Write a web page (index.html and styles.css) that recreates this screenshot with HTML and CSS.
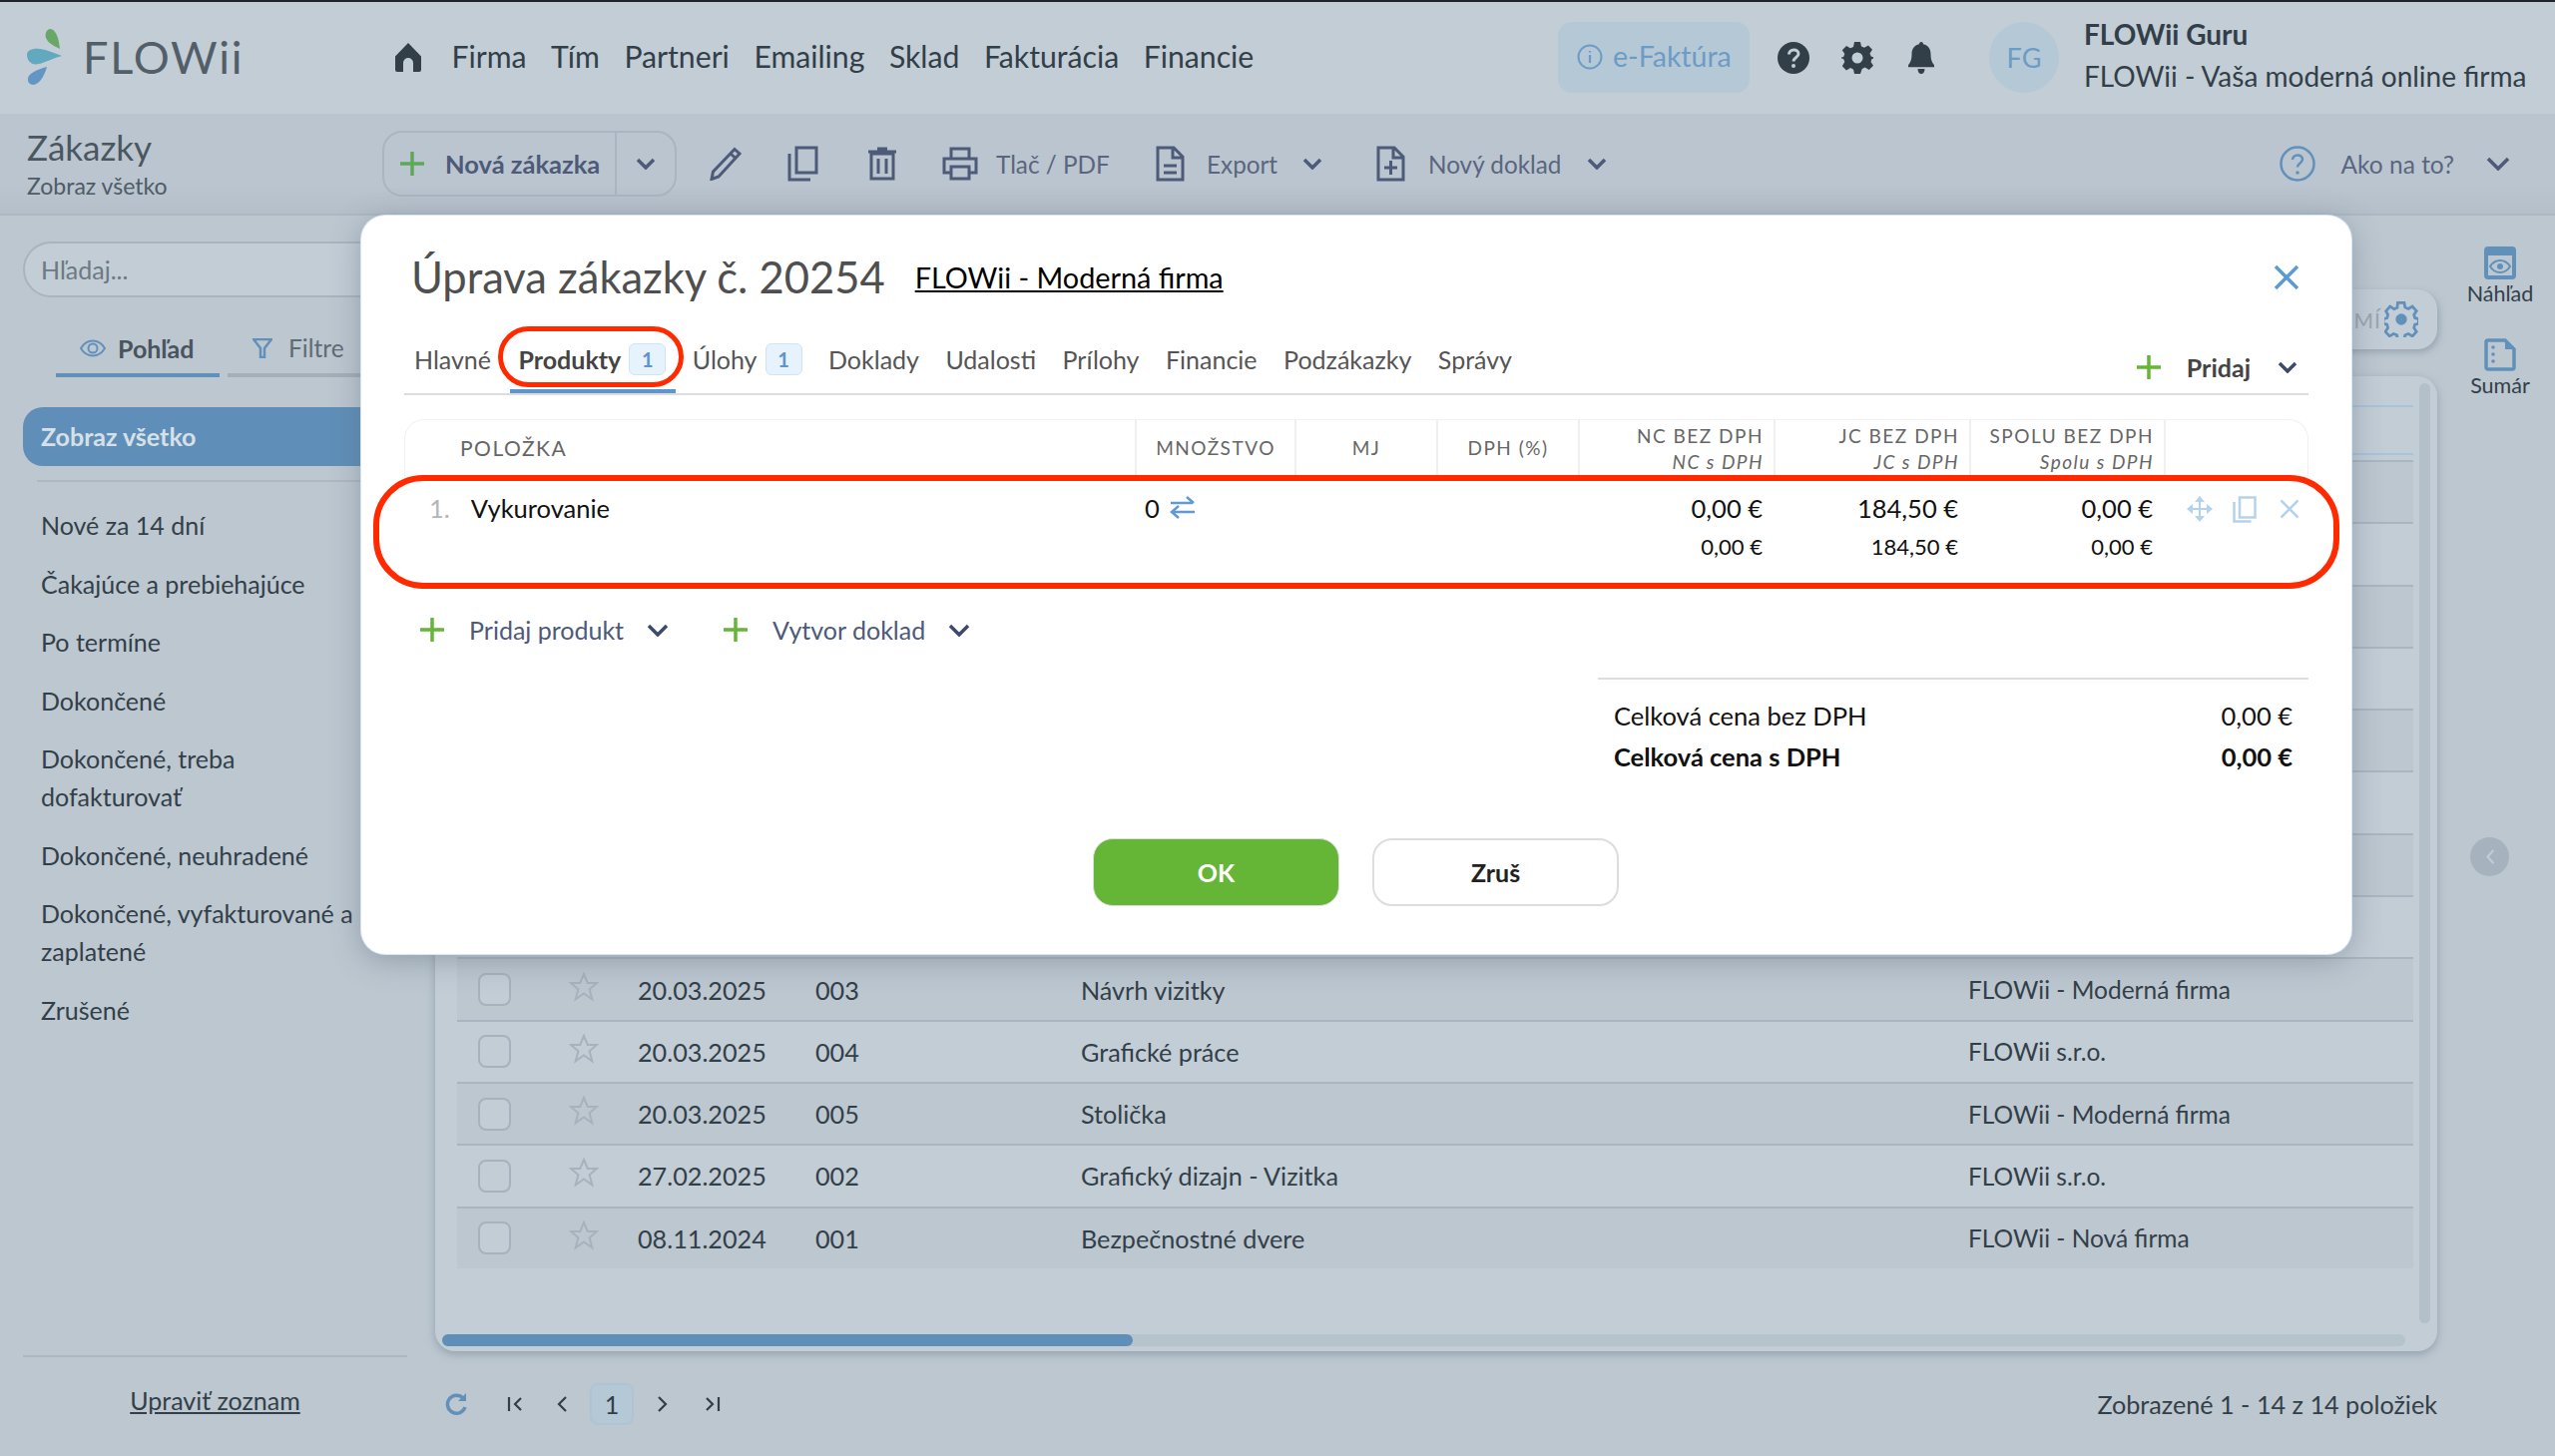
FILE: index.html
```html
<!DOCTYPE html>
<html lang="sk">
<head>
<meta charset="utf-8">
<title>FLOWii - Zákazky</title>
<link rel="stylesheet" href="styles.css">
</head>
<body>
<div class="app">
  <header class="topbar">
    <div class="logo">
      <svg class="logo-mark" viewBox="0 0 44 58" width="44" height="58"><path fill="#67a866" d="M24 1c-4 1-5 5-4 9 2 5 8 8 14 11-1-8-2-13-5-17-1-2-3-3-5-3z"/><path fill="#62a8bf" d="M1 27c0 6 5 11 12 9 6-1 14-6 23-8-8-3-15-6-22-7C7 20 1 22 1 27z"/><path fill="#6496c3" d="M2 52c0 4 5 7 10 3 4-3 7-9 9-16-8 2-15 5-18 9-1 1-1 3-1 4z"/></svg>
      <span class="logo-text">FLOWii</span>
    </div>
    <nav class="nav">
      <svg class="home" viewBox="0 0 26 29" width="26" height="29"><path fill="#333f48" d="M13 0 0 13.500V27a2 2 0 0 0 2 2h6v-9a5 5 0 0 1 10 0v9h6a2 2 0 0 0 2-2V13.500z"/></svg>
      <a>Firma</a><a>Tím</a><a>Partneri</a><a>Emailing</a><a>Sklad</a><a>Fakturácia</a><a>Financie</a>
    </nav>
    <div class="top-right">
      <div class="efaktura">
        <svg viewBox="0 0 26 26" width="26" height="26"><circle cx="13" cy="13" r="11.500" fill="none" stroke="#6c9cc5" stroke-width="2"/><path d="M13 11v8M13 7v1.500" stroke="#6c9cc5" stroke-width="2.200" fill="none"/></svg>
        <span>e-Faktúra</span>
      </div>
      <svg class="ti help" viewBox="0 0 32 32" width="32" height="32"><circle cx="16" cy="16" r="16" fill="#333f48"/><path d="M11.500 12.500c0-6 9.500-6 9.500-.5 0 3.500-5 3.500-5 7.500" fill="none" stroke="#c2cdd6" stroke-width="3"/><circle cx="16" cy="24" r="2" fill="#c2cdd6"/></svg>
      <svg class="ti gear" viewBox="0 0 32 32" width="32" height="32"><path fill="#333f48" fill-rule="evenodd" d="M13 0h6l1 4.500 3 1.300 4-2.400 4 4.300-2.500 3.800 1.200 3L35 16v0l-4.300 1-.2 0-1 3 2.500 3.800-4.300 4.300-4-2.500-3 1.300L19 32h-6l-1-4.600-3-1.300-4 2.500-4.200-4.300L3.300 20l-1.200-3L-2 16l4.100-1 1.200-3L.8 8.200 5 3.900l4 2.400 3-1.300zM16 10.500a5.500 5.500 0 1 0 0 11 5.500 5.500 0 0 0 0-11z"/></svg>
      <svg class="ti bell" viewBox="0 0 26 32" width="26" height="32"><path fill="#333f48" d="M13 0c1.300 0 2 1 2 2.200 5 1 7.500 4.800 7.500 10 0 5 1 8 3.500 11v2H0v-2c2.500-3 3.500-6 3.500-11 0-5.200 2.500-9 7.500-10C11 1 11.700 0 13 0zM9.500 27h7c0 3-1.500 5-3.500 5s-3.500-2-3.500-5z"/></svg>
      <div class="avatar">FG</div>
      <div class="user"><strong>FLOWii Guru</strong><span>FLOWii - Vaša moderná online firma</span></div>
    </div>
  </header>

  <section class="toolbar">
    <div class="page-title"><h1>Zákazky</h1><p>Zobraz všetko</p></div>
    <div class="split">
      <div class="split-main">
        <svg class="plus" viewBox="0 0 26 26" width="26" height="26"><path d="M13 1v24M1 13h24" stroke="#5ea85a" stroke-width="3.500"/></svg>
        <b>Nová zákazka</b>
      </div>
      <div class="split-caret"><svg class="chev" viewBox="0 0 20 12" width="20" height="12"><path d="M2 2l8 8 8-8" fill="none" stroke="#4d5a78" stroke-width="3"/></svg></div>
    </div>
    <div class="tools">
      <svg class="tool-pencil" viewBox="0 0 32 34" width="32" height="34"><path d="M25 2.500l5 4.500L9 30l-7 2.500L3.500 25zM21 7l5 4.500" fill="none" stroke="#4d5a78" stroke-width="3"/></svg>
      <svg class="tool-copy" viewBox="0 0 31 36" width="31" height="36"><path d="M9 2h20v25H9zM2 8v26h21" fill="none" stroke="#4d5a78" stroke-width="3"/></svg>
      <svg class="tool-trash" viewBox="0 0 28 34" width="28" height="34"><path d="M3 7h22v25H3zM0 5h28M9 2h10M10 12v15M18 12v15" fill="none" stroke="#4d5a78" stroke-width="3"/></svg>
      <div class="tool-print"><svg viewBox="0 0 36 34" width="36" height="34"><path d="M9 11V2h18v9M9 26H2V12h32v14h-7M9 20h18v12H9z" fill="none" stroke="#4d5a78" stroke-width="3"/></svg><span>Tlač / PDF</span></div>
      <div class="tool-export"><svg viewBox="0 0 29 36" width="29" height="36"><path d="M2 2h16l9 9v23H2zM17 2v10h10M8 20h13M8 27h13" fill="none" stroke="#4d5a78" stroke-width="3"/></svg><span>Export</span><svg class="chev" viewBox="0 0 20 12" width="20" height="12"><path d="M2 2l8 8 8-8" fill="none" stroke="#4d5a78" stroke-width="3"/></svg></div>
      <div class="tool-new"><svg viewBox="0 0 29 36" width="29" height="36"><path d="M2 2h16l9 9v23H2zM17 2v10h10M14.500 15v14M8 22h13" fill="none" stroke="#4d5a78" stroke-width="3"/></svg><span>Nový doklad</span><svg class="chev" viewBox="0 0 20 12" width="20" height="12"><path d="M2 2l8 8 8-8" fill="none" stroke="#4d5a78" stroke-width="3"/></svg></div>
    </div>
    <div class="howto">
      <svg viewBox="0 0 36 36" width="36" height="36"><circle cx="18" cy="18" r="16.500" fill="none" stroke="#6191bb" stroke-width="2.500"/><path d="M13 14c0-6 10-6 10-.5 0 4-5 4-5 8" fill="none" stroke="#6191bb" stroke-width="2.500"/><circle cx="18" cy="27" r="1.800" fill="#6191bb"/></svg>
      <span>Ako na to?</span>
      <svg class="chev" viewBox="0 0 24 14" width="24" height="14"><path d="M2 2l10 10L22 2" fill="none" stroke="#4d5a78" stroke-width="3"/></svg>
    </div>
  </section>

  <div class="workspace">
    <aside class="sidebar">
      <div class="search">Hľadaj...</div>
      <div class="side-tabs">
        <div class="side-tab active"><svg viewBox="0 0 26 18" width="26" height="18"><path d="M1 9c6-10 18-10 24 0-6 10-18 10-24 0z" fill="none" stroke="#6191bb" stroke-width="2"/><circle cx="13" cy="9" r="4.500" fill="none" stroke="#6191bb" stroke-width="2"/></svg><b>Pohľad</b></div>
        <div class="side-tab"><svg viewBox="0 0 20 20" width="20" height="20"><path d="M1 1h18l-7 9v9H8v-9z" fill="none" stroke="#6191bb" stroke-width="2.500"/></svg><span>Filtre</span></div>
      </div>
      <div class="side-current">Zobraz všetko</div>
      <ul class="side-list">
        <li>Nové za 14 dní</li>
        <li>Čakajúce a prebiehajúce</li>
        <li>Po termíne</li>
        <li>Dokončené</li>
        <li>Dokončené, treba dofakturovať</li>
        <li>Dokončené, neuhradené</li>
        <li>Dokončené, vyfakturované a zaplatené</li>
        <li>Zrušené</li>
      </ul>
      <div class="side-foot"><a>Upraviť zoznam</a></div>
    </aside>

    <main class="content">
      <div class="card">
        <div class="rows">
          <div class="thead"></div><div class="thead thead-thin"></div>
          <div class="row"></div><div class="row"></div><div class="row"></div><div class="row"></div>
          <div class="row"></div><div class="row"></div><div class="row"></div><div class="row"></div>
          <div class="row"><i class="check"></i><svg class="star" viewBox="0 0 30 30" width="30" height="30"><path d="M15 2l3.800 9h9.200l-7.400 6.300 2.700 10L15 21.500 6.700 27.300l2.700-10L2 11h9.200z" fill="none" stroke="#a6b2bd" stroke-width="2"/></svg><span class="c-date">20.03.2025</span><span class="c-num">003</span><span class="c-name">Návrh vizitky</span><span class="c-firm">FLOWii - Moderná firma</span></div>
          <div class="row"><i class="check"></i><svg class="star" viewBox="0 0 30 30" width="30" height="30"><path d="M15 2l3.800 9h9.200l-7.400 6.300 2.700 10L15 21.500 6.700 27.300l2.700-10L2 11h9.200z" fill="none" stroke="#a6b2bd" stroke-width="2"/></svg><span class="c-date">20.03.2025</span><span class="c-num">004</span><span class="c-name">Grafické práce</span><span class="c-firm">FLOWii s.r.o.</span></div>
          <div class="row"><i class="check"></i><svg class="star" viewBox="0 0 30 30" width="30" height="30"><path d="M15 2l3.800 9h9.200l-7.400 6.300 2.700 10L15 21.500 6.700 27.300l2.700-10L2 11h9.200z" fill="none" stroke="#a6b2bd" stroke-width="2"/></svg><span class="c-date">20.03.2025</span><span class="c-num">005</span><span class="c-name">Stolička</span><span class="c-firm">FLOWii - Moderná firma</span></div>
          <div class="row"><i class="check"></i><svg class="star" viewBox="0 0 30 30" width="30" height="30"><path d="M15 2l3.800 9h9.200l-7.400 6.300 2.700 10L15 21.500 6.700 27.300l2.700-10L2 11h9.200z" fill="none" stroke="#a6b2bd" stroke-width="2"/></svg><span class="c-date">27.02.2025</span><span class="c-num">002</span><span class="c-name">Grafický dizajn - Vizitka</span><span class="c-firm">FLOWii s.r.o.</span></div>
          <div class="row"><i class="check"></i><svg class="star" viewBox="0 0 30 30" width="30" height="30"><path d="M15 2l3.800 9h9.200l-7.400 6.300 2.700 10L15 21.500 6.700 27.300l2.700-10L2 11h9.200z" fill="none" stroke="#a6b2bd" stroke-width="2"/></svg><span class="c-date">08.11.2024</span><span class="c-num">001</span><span class="c-name">Bezpečnostné dvere</span><span class="c-firm">FLOWii - Nová firma</span></div>
        </div>
        <div class="hscroll"><div class="hthumb"></div></div>
        <div class="vthumb"></div>
      </div>
      <div class="pager">
        <svg class="refresh" viewBox="0 0 22 24" width="22" height="24"><path d="M18 6a9 9 0 1 0 2 9" fill="none" stroke="#6191bb" stroke-width="3.500"/><path d="M21 1v8h-8z" fill="#6191bb"/></svg>
        <svg class="pg pg-first" viewBox="0 0 16 14" width="16" height="14"><path d="M2 0v14M14 1L8 7l6 6" fill="none" stroke="#333f48" stroke-width="2.200"/></svg>
        <svg class="pg pg-prev" viewBox="0 0 12 16" width="12" height="16"><path d="M10 1L3 8l7 7" fill="none" stroke="#333f48" stroke-width="2.200"/></svg>
        <span class="pg-num">1</span>
        <svg class="pg pg-next" viewBox="0 0 12 16" width="12" height="16"><path d="M2 1l7 7-7 7" fill="none" stroke="#333f48" stroke-width="2.200"/></svg>
        <svg class="pg pg-last" viewBox="0 0 16 14" width="16" height="14"><path d="M14 0v14M2 1l6 6-6 6" fill="none" stroke="#333f48" stroke-width="2.200"/></svg>
        <span class="pg-info">Zobrazené 1 - 14 z 14 položiek</span>
      </div>
    </main>

    <aside class="rail">
      <div class="rail-item"><svg viewBox="0 0 32 33" width="32" height="33"><rect x="2" y="2" width="28" height="29" rx="2" fill="none" stroke="#6191bb" stroke-width="4"/><path d="M1 2h30v7H1z" fill="#6191bb"/><path d="M6 20c5-8 15-8 20 0-5 8-15 8-20 0z" fill="none" stroke="#6191bb" stroke-width="2"/><circle cx="16" cy="20" r="3" fill="#6191bb"/></svg><span>Náhľad</span></div>
      <div class="rail-item"><svg viewBox="0 0 32 33" width="32" height="33"><path d="M2 4a2 2 0 0 1 2-2h17l9 9v18a2 2 0 0 1-2 2H4a2 2 0 0 1-2-2z" fill="none" stroke="#6191bb" stroke-width="3.500"/><path d="M21 2v9h9z" fill="#6191bb"/><circle cx="9" cy="9" r="1.800" fill="#6191bb"/><circle cx="9" cy="16" r="1.800" fill="#6191bb"/><circle cx="9" cy="23" r="1.800" fill="#6191bb"/></svg><span>Sumár</span></div>
      <button class="collapse" type="button"><svg viewBox="0 0 12 20" width="10" height="17"><path d="M10 2L3 10l7 8" fill="none" stroke="#c2cdd6" stroke-width="2.500"/></svg></button>
    </aside>
  </div>

  <div class="gear-pill"><span>RMÍ</span><svg viewBox="0 0 36 38" width="34" height="36"><path d="M14.500 2h7l1 5 3.500 1.500 4.300-2.700 4.500 5-2.700 4.200 1 3.500 4 1v5l-4 1-1 3.500 2.700 4.200-4.500 5-4.300-2.700-3.500 1.500-1 4.500h-7l-1-4.500-3.500-1.500-4.300 2.700-4.500-5 2.700-4.200-1-3.500-4-1v-5l4-1 1-3.500L1.700 11l4.500-5 4.300 2.700L14 7.200z" transform="translate(0 -.5) scale(.98)" fill="none" stroke="#6191bb" stroke-width="3"/><circle cx="18" cy="19" r="6" fill="#6191bb"/></svg></div>

  <div class="modal">
    <div class="modal-head">
      <h2>Úprava zákazky č. 20254</h2>
      <a class="modal-link">FLOWii - Moderná firma</a>
      <svg class="modal-close" viewBox="0 0 26 26" width="26" height="26"><path d="M2 2l22 22M24 2L2 24" stroke="#5b9bd5" stroke-width="3.500"/></svg>
    </div>
    <div class="tabs">
      <a class="tab t-hlavne">Hlavné</a>
      <a class="tab tab-active">Produkty<em class="badge">1</em></a>
      <a class="tab t-ulohy">Úlohy<em class="badge">1</em></a>
      <a class="tab">Doklady</a>
      <a class="tab">Udalosti</a>
      <a class="tab">Prílohy</a>
      <a class="tab">Financie</a>
      <a class="tab">Podzákazky</a>
      <a class="tab">Správy</a>
      <div class="tab-add">
        <svg viewBox="0 0 26 26" width="26" height="26"><path d="M13 1v24M1 13h24" stroke="#65b536" stroke-width="3.500"/></svg>
        <b>Pridaj</b>
        <svg class="chev" viewBox="0 0 20 12" width="20" height="12"><path d="M2 2l8 8 8-8" fill="none" stroke="#3e4a6b" stroke-width="3"/></svg>
      </div>
    </div>

    <div class="items">
      <div class="ihead">
        <div class="col-item">POLOŽKA</div>
        <div class="col-c col-qty">MNOŽSTVO</div>
        <div class="col-c col-mj">MJ</div>
        <div class="col-c col-dph">DPH (%)</div>
        <div class="col-r col-nc"><span>NC BEZ DPH</span><i>NC s DPH</i></div>
        <div class="col-r col-jc"><span>JC BEZ DPH</span><i>JC s DPH</i></div>
        <div class="col-r col-sp"><span>SPOLU BEZ DPH</span><i>Spolu s DPH</i></div>
        <div class="col-act"></div>
      </div>
      <div class="irow">
        <div class="col-item"><span class="idx">1.</span><span class="iname">Vykurovanie</span></div>
        <div class="col-qty qty">0<svg viewBox="0 0 26 24" width="26" height="24"><path d="M1 7h22M17 1l7 6M25 16H3M9 10l-7 6 7 6" fill="none" stroke="#5f9ad6" stroke-width="2.500"/></svg></div>
        <div class="col-mj"></div>
        <div class="col-dph"></div>
        <div class="col-r col-nc money"><span>0,00 €</span><small>0,00 €</small></div>
        <div class="col-r col-jc money"><span>184,50 €</span><small>184,50 €</small></div>
        <div class="col-r col-sp money"><span>0,00 €</span><small>0,00 €</small></div>
        <div class="col-act acts">
          <svg viewBox="0 0 26 26" width="26" height="26"><path d="M13 4v18M4 13h18" stroke="#b4d2ee" stroke-width="2"/><path d="M13 0l5 6H8zM13 26l-5-6h10zM0 13l6-5v10zM26 13l-6 5V8z" fill="#b4d2ee"/></svg>
          <svg viewBox="0 0 24 27" width="24" height="27"><path d="M7 1.500h15.500v20H7zM1.500 6v19.500h17" fill="none" stroke="#b4d2ee" stroke-width="2.500"/></svg>
          <svg class="act-x" viewBox="0 0 20 20" width="20" height="20"><path d="M1.500 1.500l17 17M18.500 1.500l-17 17" stroke="#b4d2ee" stroke-width="2.500"/></svg>
        </div>
      </div>
    </div>

    <div class="adders">
      <div class="adder a-prod"><svg viewBox="0 0 26 26" width="26" height="26"><path d="M13 1v24M1 13h24" stroke="#65b536" stroke-width="3.500"/></svg><span>Pridaj produkt</span><svg class="chev" viewBox="0 0 22 13" width="22" height="13"><path d="M2 2l9 9 9-9" fill="none" stroke="#3e4a6b" stroke-width="3"/></svg></div>
      <div class="adder"><svg viewBox="0 0 26 26" width="26" height="26"><path d="M13 1v24M1 13h24" stroke="#65b536" stroke-width="3.500"/></svg><span>Vytvor doklad</span><svg class="chev" viewBox="0 0 22 13" width="22" height="13"><path d="M2 2l9 9 9-9" fill="none" stroke="#3e4a6b" stroke-width="3"/></svg></div>
    </div>

    <div class="totals">
      <div class="total"><span>Celková cena bez DPH</span><span>0,00 €</span></div>
      <div class="total total-b"><span>Celková cena s DPH</span><span>0,00 €</span></div>
    </div>

    <div class="actions">
      <button class="btn btn-ok" type="button">OK</button>
      <button class="btn btn-no" type="button">Zruš</button>
    </div>
  </div>

  <div class="mark mark-tab"></div>
  <div class="mark mark-row"></div>
</div>
</body>
</html>
```
FILE: styles.css
```css
* { box-sizing: border-box; }
html, body { margin: 0; padding: 0; }
body { font-family: Lato, "Open Sans", sans-serif; color: #333f48; background: #bcc7d0; }
a { color: inherit; }
svg { display: block; flex: none; }
h1, h2, p, ul { margin: 0; padding: 0; }
.chev path { stroke-width: 3.500; }
.app { position: relative; width: 2560px; height: 1459px; overflow: hidden; display: flex; flex-direction: column; border-top: 2px solid #20252b; }

/* top bar */
.topbar { height: 112px; flex: none; background: #c2cdd6; display: flex; align-items: center; padding: 0 0 2px 26px; }
.logo { display: flex; align-items: center; width: 370px; gap: 13px; }
.logo-text { font-size: 45px; color: #525f69; letter-spacing: 1.800px; line-height: 1; }
.nav { display: flex; align-items: center; gap: 24.500px; font-size: 30.200px; color: #333f48; margin-top: -2px; }
.home { margin-right: 6px; margin-top: 2px; }
.top-right { margin-left: auto; display: flex; align-items: center; padding-right: 29px; }
.efaktura { width: 192px; height: 71px; border-radius: 14px; background: #b5c8d6; display: flex; align-items: center; gap: 10px; padding-left: 19px; font-size: 28.500px; color: #6c9cc5; }
.efaktura span { margin-top: -2px; }
.ti.help { margin-left: 28px; margin-top: 2px; }
.ti.gear { margin-left: 32px; margin-top: 2px; }
.ti.bell { margin-left: 35px; margin-top: 2px; }
.avatar { width: 70px; height: 71px; border-radius: 50%; background: #b5c8d6; color: #6c9cc5; font-size: 27px; display: flex; align-items: center; justify-content: center; margin-left: 55px; }
.user { margin-left: 25px; display: flex; flex-direction: column; gap: 12px; font-size: 28px; color: #333f48; width: 443px; white-space: nowrap; margin-top: -4px; }
.user strong { font-size: 28px; line-height: 30px; }
.user span { line-height: 30px; }

/* toolbar */
.toolbar { height: 102px; flex: none; background: linear-gradient(#bac5cf 70%, #b4bfc9); display: flex; align-items: center; padding-left: 27px; color: #4d5a78; border-bottom: 2px solid #adb8c2; }
.page-title { width: 356px; color: #4a5660; margin-top: -2px; }
.page-title h1 { font-size: 35px; font-weight: 400; line-height: 42px; }
.page-title p { font-size: 23px; line-height: 30px; margin-top: 3px; color: #4f5b66; }
.split { width: 295px; height: 66px; border: 2px solid #a9b5c0; border-radius: 20px; display: flex; align-items: center; flex: none; }
.split-main { width: 233px; display: flex; align-items: center; gap: 20px; padding-left: 15px; font-size: 25.500px; height: 100%; border-right: 2px solid #a9b5c0; white-space: nowrap; }
.split-caret { flex: 1; display: flex; justify-content: center; }
.tools { display: flex; align-items: center; font-size: 24.300px; color: #5a6680; }
.tool-pencil { margin-left: 33px; }
.tool-copy { margin-left: 46px; }
.tool-trash { margin-left: 50px; }
.tool-print, .tool-export, .tool-new { display: flex; align-items: center; white-space: nowrap; }
.tool-print { margin-left: 46px; gap: 18px; width: 214px; }
.tool-export { gap: 22px; width: 221px; }
.tool-export .chev, .tool-new .chev { margin-left: 3px; }
.tool-new { gap: 23px; }
.howto { margin-left: auto; margin-right: 45px; display: flex; align-items: center; gap: 26px; font-size: 24.500px; color: #5a6680; }
.howto .chev { margin-left: 6px; }

/* workspace */
.workspace { flex: 1; display: flex; min-height: 0; }
.sidebar { width: 436px; flex: none; display: flex; flex-direction: column; padding: 26px 28px 0 23px; font-size: 25px; }
.search { height: 56px; border: 2px solid #a8b4bf; border-radius: 28px; background: #c2cdd6; padding-left: 16px; line-height: 52px; color: #6d7983; width: 385px; font-size: 25px; flex: none; }
.side-tabs { display: flex; gap: 8px; margin: 33px 0 0 33px; flex: none; }
.side-tab { flex: none; height: 47px; width: 164px; display: flex; align-items: center; justify-content: flex-start; gap: 12px; padding: 0 0 8px 24px; border-bottom: 4px solid #a3afb9; color: #5f6b75; font-size: 25px; }
.side-tab + .side-tab { width: 192px; padding-left: 25px; gap: 16px; font-size: 24.500px; }
.side-tab.active { border-bottom-color: #6191bb; color: #49545e; }
.side-current { margin-top: 30px; width: 385px; height: 59px; border-radius: 20px 0 0 20px; background: #5f8fb8; color: #d7e0e7; font-weight: 700; line-height: 59px; padding-left: 18px; font-size: 25px; flex: none; }
.side-list { list-style: none; margin: 14px 0 0 14px; padding: 24px 0 0 4px; border-top: 2px solid #adb8c2; flex: 1; }
.side-list li { line-height: 38px; padding: 0 0 20.500px; width: 325px; }
.side-foot { border-top: 2px solid #adb8c2; height: 101px; flex: none; display: flex; justify-content: center; padding-top: 27px; }
.side-foot a { text-decoration: underline; line-height: 32px; }

.content { width: 2006px; flex: none; display: flex; flex-direction: column; padding-top: 161px; }
.card { position: relative; height: 977px; border-radius: 20px; background: #c2cdd6; box-shadow: 0 3px 8px rgba(120,135,150,.6); padding: 29px 24px 0 22px; }
.rows { display: flex; flex-direction: column; }
.thead { flex: none; height: 48px; border-top: 2px solid #a9c3da; }
.thead-thin { height: 7px; }
.row { flex: none; height: 62.300px; border-top: 2px solid #a9b5c0; display: flex; align-items: center; font-size: 25.200px; white-space: nowrap; }
.row:nth-child(odd) { background: #bcc7d0; }
.check { width: 33px; height: 33px; border: 2px solid #a6b2bd; border-radius: 8px; margin-left: 21px; background: #c2cdd6; }
.star { margin-left: 58px; margin-top: -6px; }
.c-date { margin-left: 39px; width: 178px; }
.c-num { width: 266px; }
.c-name { width: 889px; }
.c-firm { font-size: 24.500px; }
.hscroll { position: absolute; left: 7px; right: 32px; top: 960px; height: 12px; border-radius: 6px; background: #b5c3cd; }
.hthumb { width: 692px; height: 12px; border-radius: 6px; background: #5f8fb8; }
.vthumb { position: absolute; right: 7px; top: 7px; width: 11px; height: 942px; border-radius: 6px; background: #b3bfc9; }
.pager { height: 60px; margin-top: 23px; display: flex; align-items: center; font-size: 25.200px; padding-left: 10px; }
.pg-first { margin-left: 40px; }
.pg-prev { margin-left: 33px; }
.pg-num { margin-left: 22px; width: 44px; height: 42px; border: 2px solid #aec4d6; border-radius: 8px; background: #b5c8d6; text-align: center; line-height: 38px; }
.pg-next { margin-left: 23px; }
.pg-last { margin-left: 36px; }
.pg-info { margin-left: auto; }
.rail { flex: 1; position: relative; display: flex; flex-direction: column; align-items: center; padding: 31px 0 0 0; gap: 31px; font-size: 21.500px; }
.rail-item { display: flex; flex-direction: column; align-items: center; gap: 0; margin-left: 8px; line-height: 28px; }
.collapse { position: absolute; left: 33px; top: 623px; width: 39px; height: 39px; border: 0; padding: 0; border-radius: 50%; background: #a6b3be; display: flex; align-items: center; justify-content: center; }

.gear-pill { position: absolute; right: 118px; top: 288px; width: 140px; height: 60px; border-radius: 0 20px 20px 0; background: #c2cdd6; box-shadow: 2px 3px 6px rgba(120,135,150,.5); display: flex; align-items: center; justify-content: flex-end; gap: 3px; padding-right: 19px; color: #9aa5af; font-size: 21px; letter-spacing: 1px; }

/* modal */
.modal { position: absolute; left: 362px; top: 214px; width: 1994px; height: 740px; background: #fff; border-radius: 24px; box-shadow: 0 0 0 1px #d5e6f5, 0 6px 30px rgba(90,105,120,.45); padding: 0 43px; display: flex; flex-direction: column; color: #000; }
.modal-head { height: 124px; display: flex; align-items: center; padding: 0 8px 0 7px; flex: none; }
.modal-head h2 { font-size: 43.500px; font-weight: 400; color: #4f4f4f; white-space: nowrap; margin-top: -2px; }
.modal-link { margin-left: 30px; font-size: 28.800px; text-decoration: underline; color: #000; }
.modal-close { margin-left: auto; margin-right: 1px; }
.tabs { height: 56px; flex: none; display: flex; align-items: flex-start; border-bottom: 2px solid #dcdce2; font-size: 25px; color: #555; padding-left: 10px; gap: 26.500px; position: relative; }
.tab { display: flex; align-items: center; height: 40px; line-height: 40px; white-space: nowrap; }
.tab-active { font-weight: 700; color: #444; margin-left: 1px; position: relative; }
.tab-active::after { content: ""; position: absolute; left: -9px; right: -10px; bottom: -14px; height: 4px; background: #5f95c9; }
.badge { font-style: normal; font-weight: 700; font-size: 20px; color: #5f95c9; width: 37px; height: 32px; line-height: 30px; text-align: center; background: #e6f2fc; border: 1px solid #cfe4f7; border-radius: 6px; margin-left: 8px; }
.tab-add { position: absolute; right: 11px; top: 13px; display: flex; align-items: center; color: #444; }
.tab-add b { margin: 0 27px 0 25px; }
.items { flex: none; margin-top: 24px; }
.ihead { height: 58px; display: flex; border: 1px solid #f1f1f3; border-bottom: 0; border-radius: 20px 20px 0 0; color: #666; font-size: 19px; letter-spacing: 1.500px; }
.ihead .col-item { font-size: 21px; line-height: 56px; padding-left: 55px; }
.ihead > div + div { border-left: 2px solid #f0f0f2; }
.col-item { width: 731px; }
.col-qty { width: 160px; }
.col-mj { width: 142px; }
.col-dph { width: 142px; }
.col-nc { width: 196px; }
.col-jc { width: 196px; }
.col-sp { width: 195px; }
.col-act { flex: 1; }
.col-c { text-align: center; line-height: 56px; }
.col-r { display: flex; flex-direction: column; align-items: flex-end; padding-right: 10px; }
.ihead .col-r span { line-height: 26px; margin-top: 3px; }
.ihead .col-r i { line-height: 26px; }
.irow { height: 106px; display: flex; padding-top: 14px; font-size: 25.500px; color: #111; }
.irow .col-item { padding: 2px 0 0 25px; display: flex; gap: 21px; }
.idx { color: #b5b5b5; }
.qty { display: flex; align-items: flex-start; gap: 10px; padding: 2px 0 0 11px; }
.qty svg { margin-top: 3px; }
.money small { font-size: 22px; margin-top: 7px; line-height: 30px; }
.money span { line-height: 34px; }
.acts { display: flex; gap: 20px; align-items: flex-start; padding: 5px 0 0 24px; }
.act-x { margin: 3px 0 0 3px; }
.adders { flex: none; display: flex; margin-top: 32px; padding-left: 15px; font-size: 25px; color: #4d5a78; gap: 54px; height: 30px; align-items: center; }
.adder { display: flex; align-items: center; gap: 24px; }
.adder .chev { margin-left: -1px; }
.totals { flex: none; width: 712px; margin: 33px 0 0 1196px; border-top: 2px solid #ddd; padding: 17px 16px 0; font-size: 25.500px; color: #111; }
.total { display: flex; justify-content: space-between; line-height: 38px; }
.total-b { font-weight: 700; margin-top: 3px; }
.actions { flex: none; display: flex; gap: 33px; margin: 63px 0 0 690px; }
.btn { font-family: inherit; font-size: 25px; font-weight: 700; width: 247px; height: 68px; border-radius: 20px; }
.btn-ok { background: #65b536; color: #fff; border: 1px solid #ddd; }
.btn-no { background: #fff; color: #222; border: 2px solid #ddd; }

.mark { position: absolute; border: 6px solid #ff2a00; }
.mark-tab { left: 499px; top: 325px; width: 186px; height: 61px; border-radius: 31px; border-width: 5px; }
.mark-row { left: 374px; top: 474px; width: 1970px; height: 114px; border-radius: 50px; }
```
